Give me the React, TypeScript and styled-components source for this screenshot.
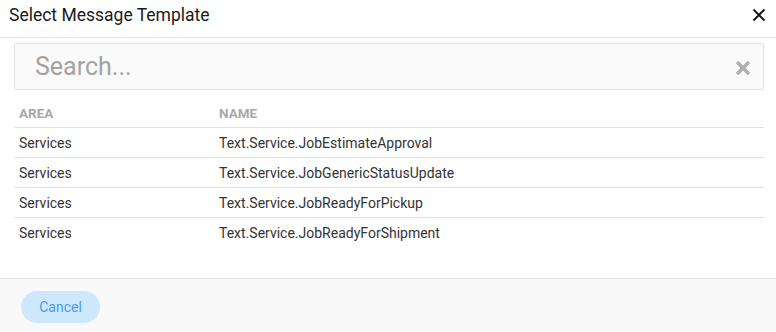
import styled, { createGlobalStyle } from "styled-components";
import { FaTimes } from "react-icons/fa";

const GlobalStyle = createGlobalStyle`
  html, body {
    margin: 0;
    padding: 0;
    background: #ffffff;
    font-family: Roboto, "Liberation Sans", sans-serif;
  }
`;

const Dialog = styled.div`
  width: 776px;
  height: 332px;
  display: flex;
  flex-direction: column;
  background: #ffffff;
  box-sizing: border-box;
`;

const Header = styled.div`
  height: 38px;
  display: flex;
  align-items: center;
  justify-content: space-between;
  padding: 0 10px 0 9px;
  border-bottom: 1px solid #e6e6e6;
  box-sizing: border-box;
`;

const Title = styled.div`
  font-size: 17.5px;
  color: #1a1a1a;
  margin-top: -7px;
`;

const CloseButton = styled.button`
  border: none;
  background: none;
  padding: 0;
  width: 14px;
  height: 14px;
  display: flex;
  margin-top: -8px;
  cursor: pointer;
`;

const Body = styled.div`
  flex: 1;
  padding: 5px 12px 0 14px;
  display: flex;
  flex-direction: column;
`;

const SearchBox = styled.div`
  height: 47px;
  display: flex;
  align-items: center;
  background: #fafafa;
  border: 1px solid #e3e3e3;
  border-radius: 2px;
  box-sizing: border-box;
  padding: 0 10px 0 20px;
`;

const SearchInput = styled.input`
  flex: 1;
  border: none;
  outline: none;
  background: transparent;
  font-family: Roboto, "Liberation Sans", sans-serif;
  font-size: 25px;
  color: #333;
  padding: 0;

  &::placeholder {
    color: #a3a3a3;
  }
`;

const ClearIcon = styled.span`
  display: flex;
  color: #b0b0b0;
  font-size: 20px;
  margin-top: 2px;
`;

const Table = styled.table`
  width: 100%;
  border-collapse: collapse;
  margin-top: 9px;
`;

const HeadCell = styled.th<{ $width?: number }>`
  text-align: left;
  font-size: 13.5px;
  font-weight: 700;
  color: #a8a8a8;
  text-transform: uppercase;
  height: 28px;
  padding: 0 5px;
  border-bottom: 1px solid #e2e2e2;
  width: ${({ $width }) => ($width ? `${$width}px` : "auto")};
`;

const Cell = styled.td`
  font-size: 14px;
  color: #333333;
  height: 29px;
  padding: 0 5px;
  border-bottom: 1px solid #e2e2e2;
`;

const Row = styled.tr`
  &:last-child td {
    border-bottom: none;
  }
`;

const Footer = styled.div`
  height: 54px;
  background: #f9f9f9;
  border-top: 1px solid #e4e4e4;
  box-sizing: border-box;
  padding: 12px 21px 0;
`;

const CancelButton = styled.button`
  width: 79px;
  height: 32px;
  border: none;
  border-radius: 16px;
  background: #cde8fd;
  color: #4a9be6;
  font-family: Roboto, "Liberation Sans", sans-serif;
  font-size: 14px;
  cursor: pointer;
`;

const templates = [
  { area: "Services", name: "Text.Service.JobEstimateApproval" },
  { area: "Services", name: "Text.Service.JobGenericStatusUpdate" },
  { area: "Services", name: "Text.Service.JobReadyForPickup" },
  { area: "Services", name: "Text.Service.JobReadyForShipment" },
];

const App = () => {
  return (
    <>
      <GlobalStyle />
      <Dialog>
        <Header>
          <Title>Select Message Template</Title>
          <CloseButton aria-label="Close">
            <svg width="14" height="14" viewBox="0 0 14 14">
              <path d="M1.5 1.5 L12.5 12.5 M12.5 1.5 L1.5 12.5" stroke="#111" strokeWidth="1.9" />
            </svg>
          </CloseButton>
        </Header>
        <Body>
          <SearchBox>
            <SearchInput placeholder="Search..." />
            <ClearIcon>
              <FaTimes />
            </ClearIcon>
          </SearchBox>
          <Table>
            <thead>
              <tr>
                <HeadCell $width={190}>Area</HeadCell>
                <HeadCell>Name</HeadCell>
              </tr>
            </thead>
            <tbody>
              {templates.map((t) => (
                <Row key={t.name}>
                  <Cell>{t.area}</Cell>
                  <Cell>{t.name}</Cell>
                </Row>
              ))}
            </tbody>
          </Table>
        </Body>
        <Footer>
          <CancelButton>Cancel</CancelButton>
        </Footer>
      </Dialog>
    </>
  );
};

export default App;
